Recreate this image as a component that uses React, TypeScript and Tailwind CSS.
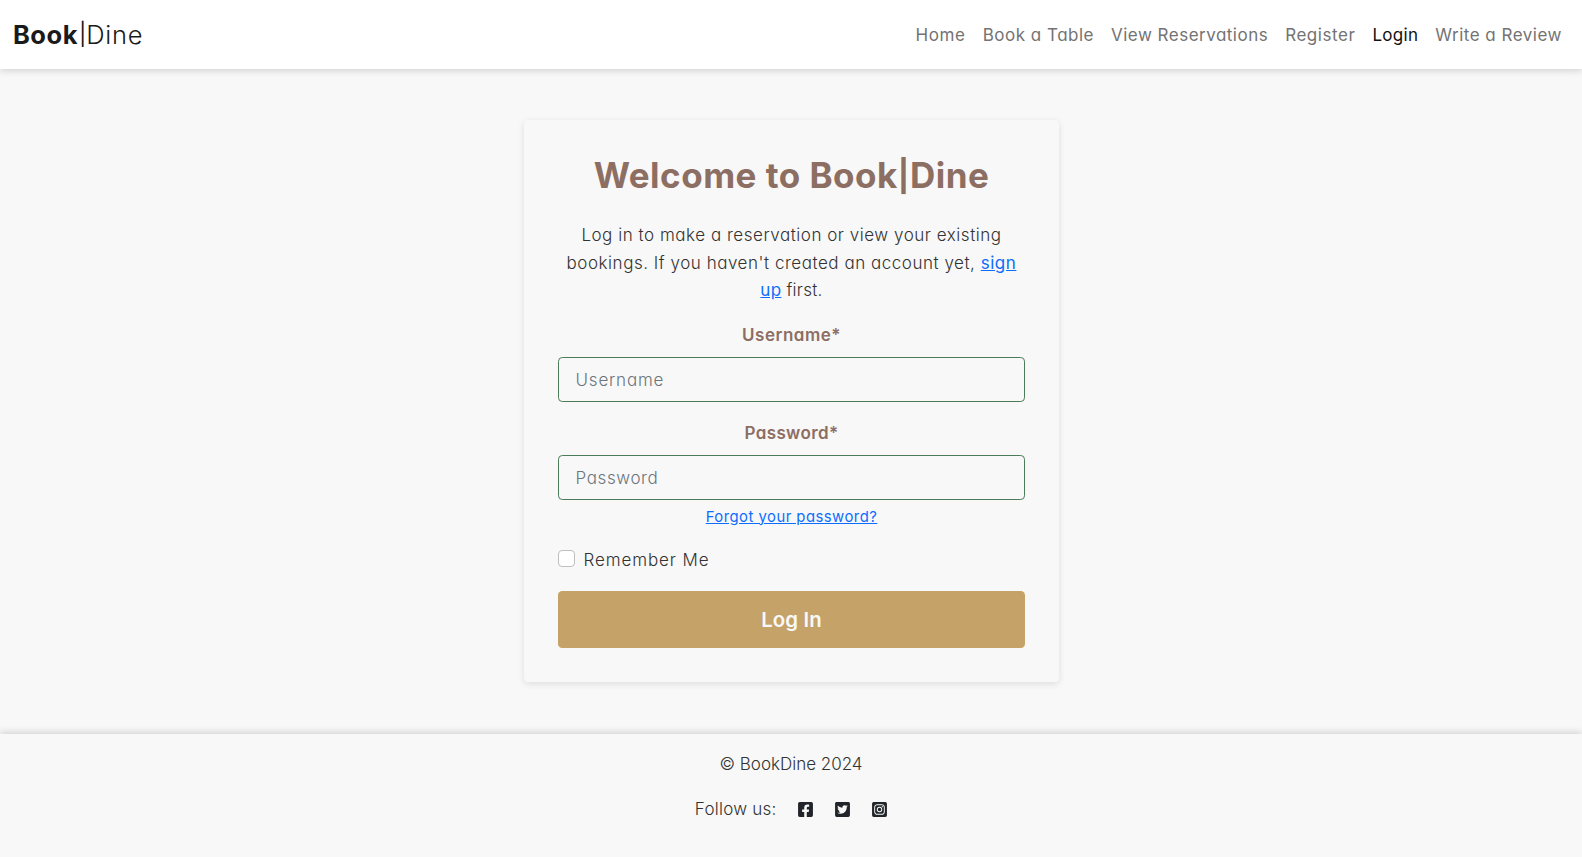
import { FaFacebookSquare, FaInstagramSquare, FaTwitterSquare } from "react-icons/fa";

const links = [
  { label: "Home", cls: "tracking-[0.65px]" },
  { label: "Book a Table", cls: "tracking-[0.5px]" },
  { label: "View Reservations", cls: "tracking-[0.49px]" },
  { label: "Register", cls: "tracking-[0.55px]" },
  { label: "Login", cls: "tracking-[0.3px]", active: true },
  { label: "Write a Review", cls: "tracking-[0.5px]" },
];

function Navbar() {
  return (
    <nav className="relative flex h-[69px] shrink-0 items-center justify-between bg-white pr-[20px] pl-[13px] shadow-[0_2px_7px_rgba(0,0,0,0.15)]">
      <a className="flex items-center text-[25.5px] leading-[38px] text-[#1a1a1a]">
        <span className="font-bold tracking-[0.5px]">Book</span>
        <span className="pb-[2px] pl-[1px] text-[22px] font-normal">|</span>
        <span className="font-light tracking-[0.7px]">Dine</span>
      </a>
      <ul className="flex gap-[17px] pt-[2px] text-[17px] leading-[27px]">
        {links.map((l) => (
          <li key={l.label} className={l.cls}>
            <a className={l.active ? "text-[#111111]" : "text-[#737373]"}>{l.label}</a>
          </li>
        ))}
      </ul>
    </nav>
  );
}

function LoginCard() {
  return (
    <section className="mx-auto mt-[51px] h-[562px] w-[535px] rounded-[4.25px] bg-[#f8f8f8] px-[34px] pt-[34px] text-center shadow-[0_2px_7px_rgba(0,0,0,0.11)]">
      <h1 className="pl-[1px] text-[35px] leading-[42px] font-bold tracking-[0.5px] text-[#8d6e63]">
        Welcome to Book<span className="inline-block -translate-y-px text-[31px] leading-none">|</span>Dine
      </h1>
      <p className="mt-[26px] pl-[1px] text-[17px] leading-[27.5px] font-light whitespace-nowrap">
        <span className="tracking-[0.53px]">Log in to make a reservation or view your existing</span>
        <br />
        <span className="tracking-[0.53px]">
          bookings. If you haven't created an account yet,{" "}
          <a className="font-normal text-[#0d6efd] underline">sign</a>
        </span>
        <br />
        <span className="tracking-[0.27px]">
          <a className="font-normal text-[#0d6efd] underline">up</a> first.
        </span>
      </p>
      <form>
        <label className="mt-[17px] block pl-[1px] text-[17px] leading-[27px] font-semibold tracking-[0.5px] text-[#8d6e63]">
          Username*
        </label>
        <input
          type="text"
          placeholder="Username"
          className="mt-[8px] block h-[45px] w-full rounded-[4.25px] border border-[#4a7c59] bg-transparent px-[17px] pt-[2px] text-[17px] font-light tracking-[0.8px] placeholder:text-[#6c757d]"
        />
        <label className="mt-[18px] block pl-[1px] text-[17px] leading-[27px] font-semibold tracking-[0.36px] text-[#8d6e63]">
          Password*
        </label>
        <input
          type="password"
          placeholder="Password"
          className="mt-[8px] block h-[45px] w-full rounded-[4.25px] border border-[#4a7c59] bg-transparent px-[17px] pt-[2px] text-[17px] font-light tracking-[0.6px] placeholder:text-[#6c757d]"
        />
        <div className="mt-[5px] pl-[1px] text-[14.875px] leading-[25px] tracking-[0.47px] text-[#0d6efd]">
          <a className="underline">Forgot your password?</a>
        </div>
        <div className="mt-[16px] flex h-[27px] items-start text-left">
          <input
            type="checkbox"
            className="mt-[4px] size-[17px] appearance-none rounded border border-[#bfbfbf] bg-white"
          />
          <label className="ml-[9px] text-[17px] leading-[29px] font-light tracking-[0.9px]">
            Remember Me
          </label>
        </div>
        <button
          type="button"
          className="mt-[18px] block h-[57px] w-full rounded-[4.25px] bg-[#c5a267] pt-[2px] pl-[1px] text-[20.4px] font-semibold tracking-[0.1px] text-[#f8f8f8]"
        >
          Log In
        </button>
      </form>
    </section>
  );
}

function Footer() {
  return (
    <footer className="mt-[52px] flex flex-1 flex-col items-center bg-[#f8f8f8] pt-[17px] text-[17px] leading-[27px] font-light shadow-[0_-2px_7px_rgba(0,0,0,0.15)]">
      <p>© BookDine 2024</p>
      <div className="mt-[18px] flex items-center pl-[1px]">
        <span className="tracking-[0.25px]">Follow us:</span>
        <div className="ml-[20.5px] flex gap-[20px] text-[17px] text-[#212529]">
          <FaFacebookSquare className="-mt-px" />
          <FaTwitterSquare className="-mt-px" />
          <FaInstagramSquare className="-mt-px" />
        </div>
      </div>
    </footer>
  );
}

export default function App() {
  return (
    <div className="flex h-screen flex-col overflow-hidden bg-[#f8f8f8] font-[Inter,sans-serif] text-[#333333] [font-feature-settings:'cv11']">
      <Navbar />
      <LoginCard />
      <Footer />
    </div>
  );
}
